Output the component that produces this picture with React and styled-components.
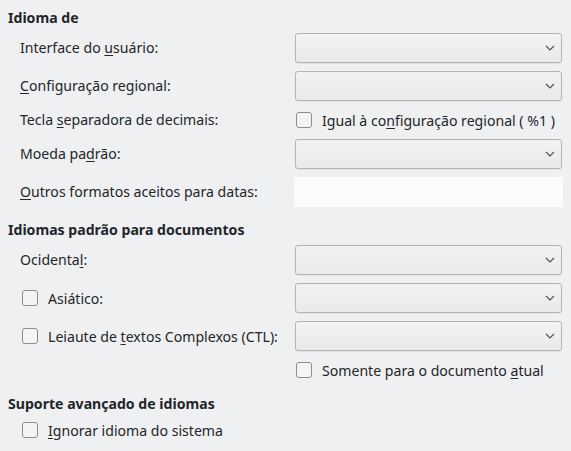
import React from "react";
import styled, { createGlobalStyle } from "styled-components";

const Global = createGlobalStyle`
  html, body { margin: 0; padding: 0; background: #eff0f1; }
  body { font-family: "Noto Sans", "DejaVu Sans", sans-serif; font-size: 14.1px; color: #232629; }
`;

const Page = styled.div`
  box-sizing: border-box;
  width: 571px;
  height: 451px;
  padding: 8px 8px 0 8px;
  display: flex;
  flex-direction: column;
  gap: 13px;
`;

const Section = styled.section`
  display: flex;
  flex-direction: column;
  gap: 5px;
`;

const Heading = styled.div`
  height: 20px;
  line-height: 20px;
  font-weight: 700;
  white-space: nowrap;
`;

const Grid = styled.div`
  display: grid;
  grid-template-columns: 274px 269px;
  row-gap: 8px;
  padding-left: 12px;
  align-items: center;
`;

const Label = styled.div`
  white-space: nowrap;
  line-height: 20px;
`;

const Mn = styled.span`
  text-decoration: underline;
  text-underline-offset: 2px;
  text-decoration-thickness: 1px;
`;

const ComboBox = styled.div`
  box-sizing: border-box;
  height: 30px;
  margin: 0 1px;
  border: 1px solid #b3b4b5;
  border-radius: 3px;
  background: linear-gradient(#f2f2f3, #e9eaeb);
  box-shadow: 0 1px 1px rgba(0, 0, 0, 0.06);
  display: flex;
  align-items: center;
  justify-content: flex-end;
  padding-right: 6px;
`;

const TextField = styled.div`
  box-sizing: border-box;
  height: 30px;
  background: #fcfcfc;
`;

const CheckRow = styled.label`
  display: flex;
  align-items: center;
  height: 22px;
  gap: 10px;
  padding-left: ${(p) => p.$inset}px;
  white-space: nowrap;
  grid-column: ${(p) => p.$col || "auto"};
`;

const Box = styled.span`
  box-sizing: border-box;
  width: 16px;
  height: 16px;
  flex: none;
  border: 1px solid #8b8d8f;
  border-radius: 3px;
  background: #f4f4f5;
`;

const Chevron = () => (
  <svg width="10" height="6" viewBox="0 0 10 6">
    <path d="M1 1 L5 5 L9 1" fill="none" stroke="#4d4f51" strokeWidth="1.1" />
  </svg>
);

const Combo = () => (
  <ComboBox>
    <Chevron />
  </ComboBox>
);

const Check = ({ children, inset = 0, col }) => (
  <CheckRow $inset={inset} $col={col}>
    <Box />
    <span>{children}</span>
  </CheckRow>
);

export default function App() {
  return (
    <>
      <Global />
      <Page>
        <Section>
          <Heading>Idioma de</Heading>
          <Grid>
            <Label>
              Interface do <Mn>u</Mn>suário:
            </Label>
            <Combo />
            <Label>
              <Mn>C</Mn>onfiguração regional:
            </Label>
            <Combo />
            <Label>
              Tecla <Mn>s</Mn>eparadora de decimais:
            </Label>
            <Check inset={2}>
              Igual à co<Mn>n</Mn>figuração regional ( %1 )
            </Check>
            <Label>
              Moeda pa<Mn>d</Mn>rão:
            </Label>
            <Combo />
            <Label>
              <Mn>O</Mn>utros formatos aceitos para datas:
            </Label>
            <TextField />
          </Grid>
        </Section>
        <Section>
          <Heading>Idiomas padrão para documentos</Heading>
          <Grid>
            <Label>
              Ocidenta<Mn>l</Mn>:
            </Label>
            <Combo />
            <Check inset={2}>Asiático:</Check>
            <Combo />
            <Check inset={2}>
              Leiaute de <Mn>t</Mn>extos Complexos (CTL):
            </Check>
            <Combo />
            <Check inset={2} col="2">
              Somente para o documento <Mn>a</Mn>tual
            </Check>
          </Grid>
        </Section>
        <Section>
          <Heading>Suporte avançado de idiomas</Heading>
          <Grid>
            <Check inset={2}>
              <Mn>I</Mn>gnorar idioma do sistema
            </Check>
          </Grid>
        </Section>
      </Page>
    </>
  );
}
